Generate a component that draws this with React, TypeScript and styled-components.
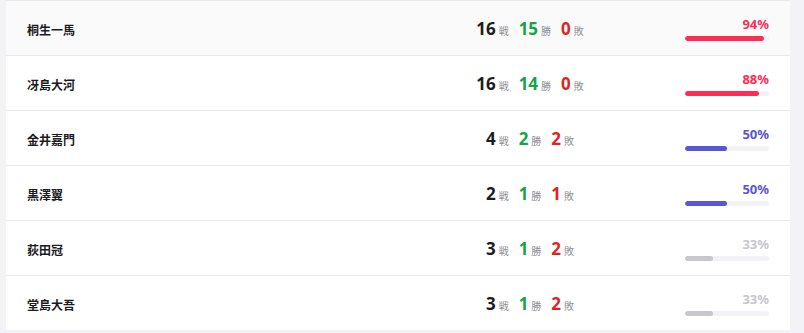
import React from 'react';
import styled, { createGlobalStyle } from 'styled-components';

const GlobalStyle = createGlobalStyle`
  body {
    margin: 0;
    background: #f2f2f7;
    font-family: "Noto Sans", "Noto Sans CJK JP", sans-serif;
  }
`;

type Player = {
  name: string;
  games: number;
  wins: number;
  losses: number;
};

const players: Player[] = [
  { name: '桐生一馬', games: 16, wins: 15, losses: 0 },
  { name: '冴島大河', games: 16, wins: 14, losses: 0 },
  { name: '金井嘉門', games: 4, wins: 2, losses: 2 },
  { name: '黒澤翼', games: 2, wins: 1, losses: 1 },
  { name: '荻田冠', games: 3, wins: 1, losses: 2 },
  { name: '堂島大吾', games: 3, wins: 1, losses: 2 },
];

const Page = styled.div`
  padding-left: 6px;
  width: 784px;
`;

const Card = styled.div`
  background: #fff;
`;

const Row = styled.div<{ $active?: boolean }>`
  display: grid;
  grid-template-columns: 1fr 262px 84px;
  column-gap: 24px;
  align-items: center;
  height: 54px;
  padding: 0 21px;
  border-top: 1px solid #ebebeb;
  background: ${(p) => (p.$active ? '#fafafa' : '#fff')};
`;

const Name = styled.div`
  margin-top: 3px;
  font-size: 12px;
  font-weight: 700;
  color: #1c1c1e;
`;

const Stats = styled.div`
  display: flex;
  justify-content: center;
  align-items: baseline;
  gap: 10px;
`;

const Stat = styled.span`
  display: inline-flex;
  align-items: baseline;
  gap: 3px;
`;

const Num = styled.span<{ $tone: 'dark' | 'win' | 'lose' }>`
  font-size: 17px;
  font-weight: 700;
  color: ${(p) => (p.$tone === 'win' ? '#16a34a' : p.$tone === 'lose' ? '#dc2626' : '#1c1c1e')};
`;

const Unit = styled.span`
  font-size: 10px;
  color: #8e8e93;
`;

const Rate = styled.div`
  display: flex;
  flex-direction: column;
  align-items: flex-end;
  gap: 4px;
  padding-top: 2px;
`;

const Percent = styled.span<{ $color: string }>`
  font-size: 13px;
  font-weight: 700;
  line-height: 15px;
  color: ${(p) => p.$color};
`;

const Track = styled.div`
  width: 100%;
  height: 5px;
  border-radius: 3px;
  background: #f2f2f7;
  overflow: hidden;
`;

const Fill = styled.div<{ $color: string }>`
  height: 100%;
  border-radius: 3px;
  background: ${(p) => p.$color};
`;

const rateColor = (pct: number) => {
  if (pct >= 80) return '#ff2d55';
  if (pct >= 50) return '#5856d6';
  return '#c7c7cc';
};

export default function App() {
  return (
    <Page>
      <GlobalStyle />
      <Card>
        {players.map((p, i) => {
          const pct = Math.round((p.wins / p.games) * 100);
          const color = rateColor(pct);
          return (
            <Row key={p.name} $active={i === 0}>
              <Name>{p.name}</Name>
              <Stats>
                <Stat>
                  <Num $tone="dark">{p.games}</Num>
                  <Unit>戦</Unit>
                </Stat>
                <Stat>
                  <Num $tone="win">{p.wins}</Num>
                  <Unit>勝</Unit>
                </Stat>
                <Stat>
                  <Num $tone="lose">{p.losses}</Num>
                  <Unit>敗</Unit>
                </Stat>
              </Stats>
              <Rate>
                <Percent $color={color}>{pct}%</Percent>
                <Track>
                  <Fill $color={color} style={{ width: `${pct}%` }} />
                </Track>
              </Rate>
            </Row>
          );
        })}
      </Card>
    </Page>
  );
}
